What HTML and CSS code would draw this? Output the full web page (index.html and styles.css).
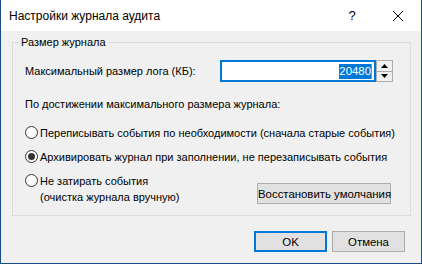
FILE: index.html
```html
<!DOCTYPE html>
<html lang="ru">
<head>
    <meta charset="UTF-8">
    <title>Настройки журнала аудита</title>
    <link rel="stylesheet" href="styles.css">
</head>
<body>
    <div class="window">
        <div class="titlebar">
            <span class="title">Настройки журнала аудита</span>
            <span class="help">?</span>
            <span class="close">
                <svg width="12" height="12" viewBox="0 0 12 12"><path d="M1 1L11 11M11 1L1 11" stroke="#000" stroke-width="1"/></svg>
            </span>
        </div>
        <div class="content">
            <fieldset class="group">
                <legend>Размер журнала</legend>
                <div class="size-row">
                    <span class="size-label">Максимальный размер лога (КБ):</span>
                    <div class="spin-input"><span class="sel">20480</span><span class="caret"></span></div>
                    <div class="spinner">
                        <div class="spin-btn"><svg width="7" height="4" viewBox="0 0 7 4"><path d="M3.5 0L7 4H0Z" fill="#000"/></svg></div>
                        <div class="spin-btn"><svg width="7" height="4" viewBox="0 0 7 4"><path d="M0 0H7L3.5 4Z" fill="#000"/></svg></div>
                    </div>
                </div>
                <p class="hint">По достижении максимального размера журнала:</p>
                <label class="radio first"><span class="dot"></span>Переписывать события по необходимости (сначала старые события)</label>
                <label class="radio"><span class="dot checked"></span>Архивировать журнал при заполнении, не перезаписывать события</label>
                <div class="last-row">
                    <label class="radio"><span class="dot"></span><span>Не затирать события<br>(очистка журнала вручную)</span></label>
                    <button class="btn restore">Восстановить умолчания</button>
                </div>
            </fieldset>
            <div class="actions">
                <button class="btn default">OK</button>
                <button class="btn">Отмена</button>
            </div>
        </div>
    </div>
</body>
</html>
```

FILE: styles.css
```css
* {
  box-sizing: border-box;
}
body {
  margin: 0;
  font-family: 'Liberation Sans', Arial, sans-serif;
  font-size: 11px;
  color: #000;
  background: #fff;
  white-space: nowrap;
}
.window {
  width: 422px;
  height: 264px;
  border: 1px solid #1b4a8a;
  border-top: none;
  display: flex;
  flex-direction: column;
}
.titlebar {
  height: 31px;
  flex-shrink: 0;
  background: #fff;
  display: flex;
  align-items: center;
  padding-left: 8px;
}
.title {
  flex: 1;
  font-size: 12px;
}
.help {
  width: 46px;
  text-align: center;
  font-size: 13px;
}
.close {
  width: 46px;
  display: flex;
  justify-content: center;
}
.content {
  flex: 1;
  background: #f0f0f0;
  padding: 3px 10px 0 11px;
}
.group {
  margin: 0;
  min-width: 0;
  height: 182px;
  border: 1px solid #dcdcdc;
  padding: 10px 12px 0 12px;
}
.group legend {
  margin-left: -6px;
  padding: 0 2px;
  line-height: 16px;
}
.size-row {
  display: flex;
  align-items: center;
  height: 22px;
}
.size-label {
  width: 195px;
}
.spin-input {
  width: 156px;
  height: 22px;
  border: 2px solid #0078d7;
  background: #fff;
  display: flex;
  justify-content: flex-end;
  align-items: center;
  padding-right: 2px;
}
.sel {
  background: #0078d7;
  color: #fff;
  line-height: 15px;
  font-size: 11.4px;
}
.caret {
  width: 1px;
  height: 15px;
  background: #e5781c;
}
.spinner {
  width: 17px;
  height: 22px;
  display: flex;
  flex-direction: column;
}
.spin-btn {
  flex: 1;
  border: 1px solid #acacac;
  background: #f0f0f0;
  display: flex;
  align-items: center;
  justify-content: center;
}
.spin-btn + .spin-btn {
  border-top: none;
}
.hint {
  margin: 14px 0 0;
  line-height: 16px;
}
.radio {
  display: flex;
  align-items: flex-start;
  line-height: 16px;
  margin-top: 8px;
}
.radio.first {
  margin-top: 13px;
}
.dot {
  width: 13px;
  height: 13px;
  border: 1px solid #333;
  border-radius: 50%;
  background: #fff;
  margin: 1px 2px 0 0;
  flex-shrink: 0;
  position: relative;
}
.dot.checked::after {
  content: "";
  position: absolute;
  left: 2px;
  top: 2px;
  width: 7px;
  height: 7px;
  border-radius: 50%;
  background: #333;
}
.last-row {
  display: flex;
  justify-content: space-between;
  align-items: flex-start;
}
.btn {
  font-family: inherit;
  font-size: 11.4px;
  color: #000;
  background: #e1e1e1;
  border: 1px solid #adadad;
  padding: 0;
  height: 21px;
}
.restore {
  width: 134px;
  margin: 18px 7px 0 0;
}
.actions {
  display: flex;
  justify-content: flex-end;
  gap: 5px;
  margin-top: 15px;
  padding-right: 6px;
}
.actions .btn {
  width: 73px;
}
.btn.default {
  border: 2px solid #0078d7;
}
```
